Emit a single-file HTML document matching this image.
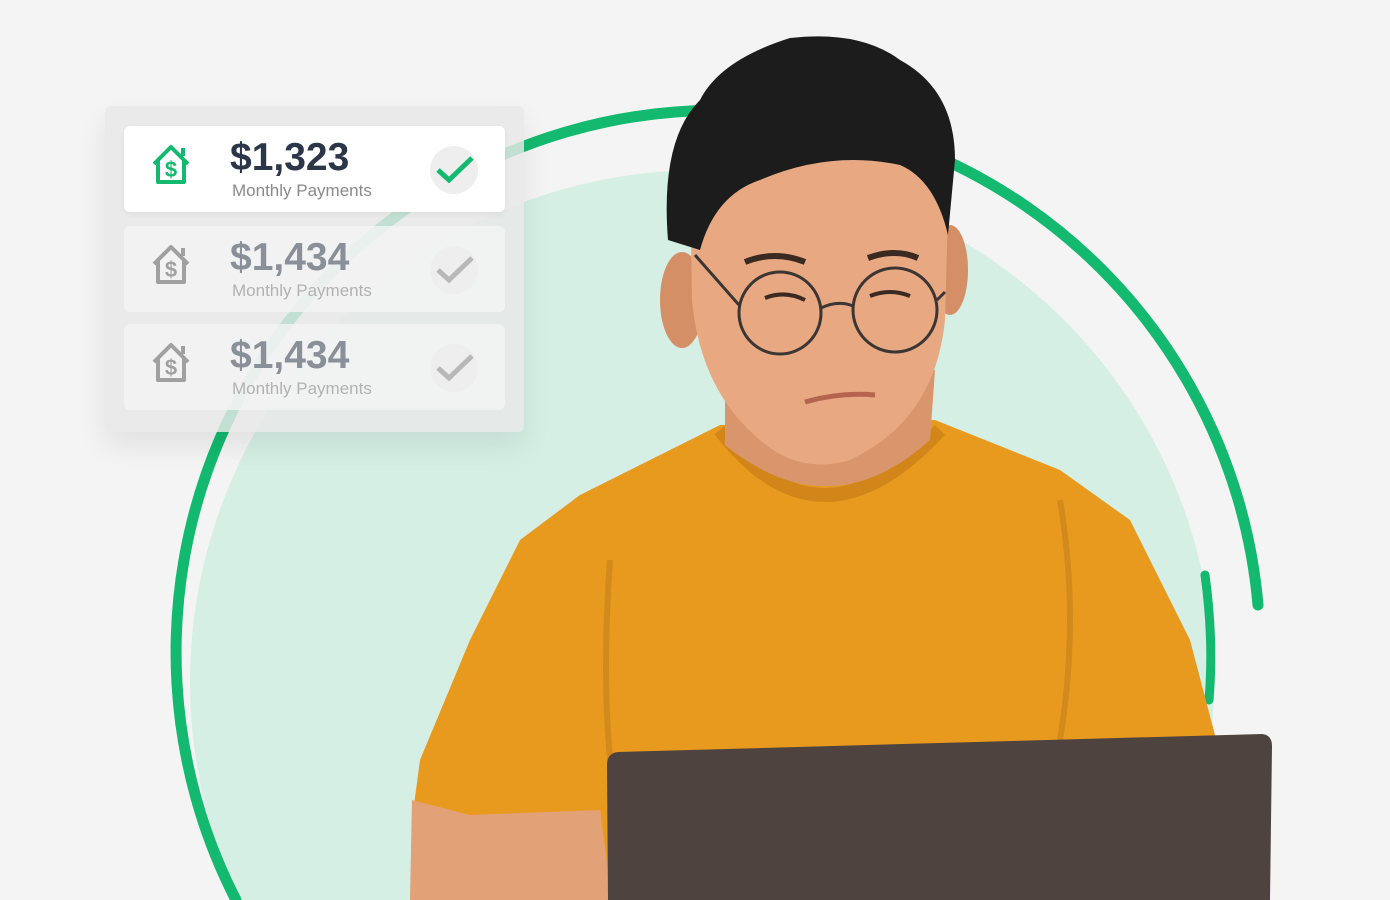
<!DOCTYPE html>
<html><head><meta charset="utf-8"><style>
html,body{margin:0;padding:0;width:1390px;height:900px;overflow:hidden}
body{background:#f4f4f4;position:relative;font-family:"Liberation Sans",Arial,sans-serif}
svg.bg{position:absolute;left:0;top:0}
.panel{position:absolute;left:105px;top:106px;width:419px;height:326px;background:rgba(232,232,232,0.82);border-radius:6px;box-shadow:0 14px 30px rgba(0,0,0,0.08)}
.row{position:absolute;left:19px;width:381px;height:86px;border-radius:6px;background:rgba(244,244,244,0.8)}
.row.a{background:#fff;box-shadow:0 2px 6px rgba(0,0,0,0.05)}
.amt{position:absolute;left:106px;top:10px;font-size:39px;font-weight:bold;color:#8a9099}
.row.a .amt{color:#2b3748}
.lbl{position:absolute;left:108px;top:55px;font-size:17px;color:#b2b2b2}
.row.a .lbl{color:#8a8a8a}
.ico{position:absolute;left:26px;top:16px}
.chk{position:absolute;left:306px;top:20px;width:48px;height:48px;border-radius:50%;background:#eeeeee}
.chk svg{position:absolute;left:4px;top:8px}
</style></head><body>
<svg class="bg" width="1390" height="900" viewBox="0 0 1390 900">
 <circle cx="702" cy="682" r="512" fill="#d5efe5"/>
 <path d="M1258,605 A542 542 0 1 0 236,900" fill="none" stroke="#13b96f" stroke-width="11" stroke-linecap="round"/>
 <path d="M1205,575 Q1214,640 1209,700" fill="none" stroke="#13b96f" stroke-width="9" stroke-linecap="round"/>
 <!-- shirt -->
 <path d="M720,425 L580,495 L520,540 L470,640 L420,760 L412,820 L470,830 L600,810 L610,900 L1215,900 L1215,735 L1190,640 L1130,520 L1060,470 L935,420 Z" fill="#e89a1e"/>
 <path d="M720,430 Q820,560 940,430" fill="none" stroke="#d2861a" stroke-width="14"/>
 <path d="M610,560 Q600,700 615,800" fill="none" stroke="#d38a1c" stroke-width="6"/>
 <path d="M1060,500 Q1080,620 1060,740" fill="none" stroke="#d38a1c" stroke-width="6"/>
 <!-- arm -->
 <path d="M412,800 L470,815 L600,810 L612,900 L410,900 Z" fill="#e2a176"/>
 <!-- neck -->
 <path d="M725,380 L935,370 L930,440 Q830,530 725,445 Z" fill="#d9966c"/>
 <!-- ears -->
 <ellipse cx="682" cy="300" rx="22" ry="48" fill="#d48f66"/>
 <ellipse cx="950" cy="270" rx="18" ry="45" fill="#d48f66"/>
 <!-- face -->
 <path d="M690,180 Q700,130 810,130 Q940,130 948,210 L945,320 Q935,420 850,460 Q800,475 760,440 Q700,390 692,300 Z" fill="#e8a982"/>
 <!-- hair -->
 <path d="M668,240 Q660,140 700,100 Q720,60 790,38 Q860,30 900,60 Q955,90 955,160 L948,235 Q935,180 900,165 Q830,150 760,180 Q715,195 700,250 Z" fill="#1d1c1c"/>
 <path d="M745,262 Q775,250 805,262" stroke="#3a2a22" stroke-width="6" fill="none"/>
 <path d="M868,258 Q895,248 918,258" stroke="#3a2a22" stroke-width="6" fill="none"/>
 <path d="M765,298 Q785,290 805,300" stroke="#3a2a22" stroke-width="4" fill="none"/>
 <path d="M870,296 Q890,288 910,296" stroke="#3a2a22" stroke-width="4" fill="none"/>
 <path d="M805,402 Q840,392 875,395" stroke="#b5654f" stroke-width="5" fill="none"/>
 <circle cx="780" cy="313" r="41" fill="none" stroke="#3b3634" stroke-width="3"/>
 <circle cx="895" cy="310" r="42" fill="none" stroke="#3b3634" stroke-width="3"/>
 <path d="M821,308 Q838,300 853,306 M739,305 L695,255 M937,300 L945,292" stroke="#3b3634" stroke-width="3" fill="none"/>
 <path d="M618,752 L1262,734 Q1272,735 1272,746 L1270,900 L608,900 L607,765 Q607,753 618,752 Z" fill="#4f4340"/>
</svg>
<div class="panel">
 <div class="row a" style="top:20px">
  <svg class="ico" width="46" height="46" viewBox="0 0 46 46"><path d="M4,22 L21,5 L38,22 M8,18 V40 H34 V18 M33,6 V14" fill="none" stroke="#13b96f" stroke-width="4" stroke-linejoin="round"/><text x="21" y="35" text-anchor="middle" font-size="22" font-weight="bold" fill="#13b96f" font-family="Liberation Sans">$</text></svg>
  <div class="amt">$1,323</div><div class="lbl">Monthly Payments</div>
  <div class="chk"><svg width="42" height="32" viewBox="0 0 42 32"><path d="M4,16 L15,26 L38,4" fill="none" stroke="#13b96f" stroke-width="5"/></svg></div>
 </div>
 <div class="row" style="top:120px">
  <svg class="ico" width="46" height="46" viewBox="0 0 46 46"><path d="M4,22 L21,5 L38,22 M8,18 V40 H34 V18 M33,6 V14" fill="none" stroke="#a0a0a0" stroke-width="4" stroke-linejoin="round"/><text x="21" y="35" text-anchor="middle" font-size="22" font-weight="bold" fill="#a0a0a0" font-family="Liberation Sans">$</text></svg>
  <div class="amt">$1,434</div><div class="lbl">Monthly Payments</div>
  <div class="chk"><svg width="42" height="32" viewBox="0 0 42 32"><path d="M4,16 L15,26 L38,4" fill="none" stroke="#b8b8b8" stroke-width="5"/></svg></div>
 </div>
 <div class="row" style="top:218px">
  <svg class="ico" width="46" height="46" viewBox="0 0 46 46"><path d="M4,22 L21,5 L38,22 M8,18 V40 H34 V18 M33,6 V14" fill="none" stroke="#a0a0a0" stroke-width="4" stroke-linejoin="round"/><text x="21" y="35" text-anchor="middle" font-size="22" font-weight="bold" fill="#a0a0a0" font-family="Liberation Sans">$</text></svg>
  <div class="amt">$1,434</div><div class="lbl">Monthly Payments</div>
  <div class="chk"><svg width="42" height="32" viewBox="0 0 42 32"><path d="M4,16 L15,26 L38,4" fill="none" stroke="#b8b8b8" stroke-width="5"/></svg></div>
 </div>
</div>
</body></html>
